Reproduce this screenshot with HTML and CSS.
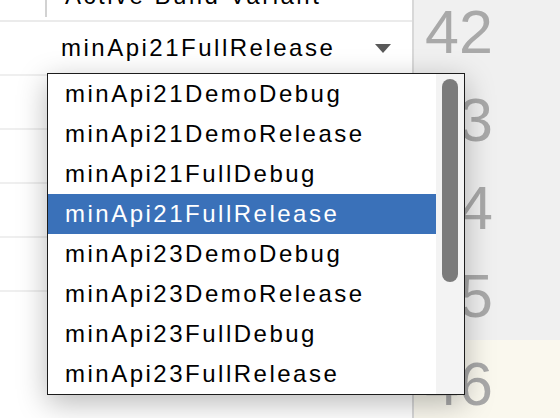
FILE: index.html
```html
<!DOCTYPE html>
<html>
<head>
<meta charset="utf-8">
<link rel="stylesheet" href="styles.css">
</head>
<body>
<div class="screen">
  <div class="table">
    <div class="head">
      <div class="head-first"></div>
      <div class="head-cell"><span class="head-text">Active Build Variant</span></div>
    </div>
    <div class="row">
      <div class="cell-first"></div>
      <div class="combo">
        <span class="combo-text">minApi21FullRelease</span>
        <svg class="arrow" width="16" height="9" viewBox="0 0 16 9"><polygon points="0,0 16,0 8,9"/></svg>
      </div>
    </div>
    <div class="row"></div>
    <div class="row"></div>
    <div class="row"></div>
    <div class="row"></div>
  </div>
  <div class="gutter">
    <div class="lines">
      <div class="ln">42</div>
      <div class="ln">43</div>
      <div class="ln">44</div>
      <div class="ln">45</div>
      <div class="ln current">46</div>
    </div>
  </div>
  <div class="popup">
    <ul class="list">
      <li class="item">minApi21DemoDebug</li>
      <li class="item">minApi21DemoRelease</li>
      <li class="item">minApi21FullDebug</li>
      <li class="item selected">minApi21FullRelease</li>
      <li class="item">minApi23DemoDebug</li>
      <li class="item">minApi23DemoRelease</li>
      <li class="item">minApi23FullDebug</li>
      <li class="item">minApi23FullRelease</li>
    </ul>
    <div class="track"><div class="thumb"></div></div>
  </div>
</div>
</body>
</html>
```

FILE: styles.css
```css
html, body {
  margin: 0;
  padding: 0;
}
body {
  font-family: "Liberation Sans", Arial, sans-serif;
  overflow: hidden;
}
.screen {
  position: relative;
  display: flex;
  width: 560px;
  height: 418px;
  overflow: hidden;
  background: #ffffff;
}
.table {
  flex: none;
  width: 412px;
  border-right: 2px solid #d8d8d8;
  background: #ffffff;
}
.head {
  display: flex;
  height: 20px;
  border-bottom: 2px solid #ebebeb;
  overflow: hidden;
}
.head-first {
  flex: none;
  width: 45px;
  height: 17px;
  border-right: 2px solid #d2d2d2;
}
.head-cell {
  flex: 1;
  padding-left: 18px;
  font-size: 24px;
  letter-spacing: 2.5px;
  color: #000000;
  white-space: nowrap;
}
.head-text {
  display: block;
  line-height: 28px;
  margin-top: -18px;
}
.row {
  display: flex;
  height: 52px;
  border-bottom: 2px solid #efefef;
}
.cell-first {
  flex: none;
  width: 47px;
}
.combo {
  flex: 1;
  display: flex;
  align-items: center;
  justify-content: space-between;
  padding-left: 14px;
  padding-right: 21px;
  font-size: 24px;
  letter-spacing: 2.5px;
  color: #000000;
  white-space: nowrap;
}
.combo-text {
  line-height: 26px;
}
.arrow {
  display: block;
  fill: #595959;
}
.gutter {
  flex: 1;
  background: #f0f0f0;
  overflow: hidden;
}
.lines {
  margin-top: -12px;
}
.ln {
  height: 88px;
  line-height: 88px;
  padding-left: 11px;
  font-size: 61px;
  color: #a9a9a9;
}
.ln.current {
  background: #faf8ee;
}
.popup {
  position: absolute;
  left: 47px;
  top: 73px;
  width: 416px;
  height: 320px;
  display: flex;
  border: 1px solid #1c1c1c;
  background: #ffffff;
  box-shadow: 0 8px 28px rgba(0, 0, 0, 0.28);
}
.list {
  flex: 1;
  margin: 0;
  padding: 0;
  list-style: none;
}
.item {
  height: 40px;
  line-height: 40px;
  padding-left: 17px;
  font-size: 24px;
  letter-spacing: 2.5px;
  color: #000000;
  white-space: nowrap;
}
.item.selected {
  background: #3a71b9;
  color: #ffffff;
}
.track {
  flex: none;
  width: 16px;
  padding: 5px 6px;
  background: #f3f3f3;
}
.thumb {
  height: 203px;
  border-radius: 8px;
  background: #7b7b7b;
}
```
